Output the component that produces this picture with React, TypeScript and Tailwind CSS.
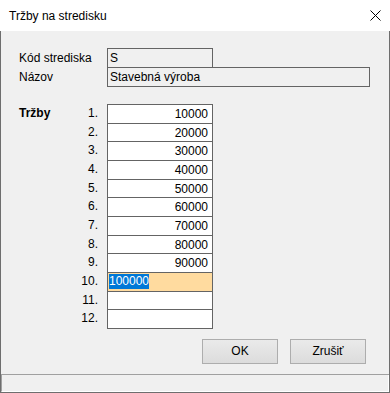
import React from 'react';

const VALUES = ['10000', '20000', '30000', '40000', '50000', '60000', '70000', '80000', '90000', '100000', '', ''];

const FONT = { fontFamily: '"Liberation Sans", Arial, sans-serif' };

function CloseIcon() {
  return (
    <svg width="11" height="11" viewBox="0 0 11 11" className="block">
      <path d="M0.5 0.5 L10.5 10.5 M10.5 0.5 L0.5 10.5" stroke="#000" strokeWidth="1" fill="none" />
    </svg>
  );
}

function Button({ label }: { label: string }) {
  return (
    <button className="w-[76px] h-[25px] border border-[#adadad] bg-gradient-to-b from-[#eaeaea] to-[#dcdcdc] text-[12px] text-black leading-none">
      {label}
    </button>
  );
}

export default function App() {
  return (
    <div className="w-[390px] h-[393px] flex flex-col bg-[#f0f0f0] text-black" style={FONT}>
      {/* Title bar */}
      <div className="h-[31px] bg-white flex items-center justify-between pl-[9px] pr-[9px] shrink-0">
        <span className="text-[12px] text-black">Tržby na stredisku</span>
        <CloseIcon />
      </div>

      {/* Body */}
      <div className="flex-1 flex flex-col border-l border-r border-b border-[#6e6e6e]">
        <div className="flex-1 flex flex-col pl-[18px] pt-[17px]">
          {/* Header fields */}
          <div className="flex items-center h-[20px]">
            <span className="w-[88px] text-[12px]">Kód strediska</span>
            <div className="w-[106px] h-[20px] border border-[#646464] pl-[2px] text-[12px] leading-[18px]">S</div>
          </div>
          <div className="flex items-center h-[20px] -mt-px">
            <span className="w-[88px] text-[12px]">Názov</span>
            <div className="w-[263px] h-[20px] border border-[#646464] pl-[2px] text-[12px] leading-[18px]">Stavebná výroba</div>
          </div>

          {/* Revenue table */}
          <div className="flex flex-col mt-[17px]">
            {VALUES.map((v, i) => (
              <div key={i} className={`flex h-[19.67px] ${i > 0 ? '-mt-px' : ''}`}>
                <div className="w-[88px] flex justify-between pr-[9px] text-[12px] leading-[19px]">
                  <span className="font-bold">{i === 0 ? 'Tržby' : ''}</span>
                  <span>{i + 1}.</span>
                </div>
                {i === 9 ? (
                  <div className="w-[106px] h-[19.67px] border border-[#646464] bg-[#ffdb9f] pl-[1px] flex items-center">
                    <span className="bg-[#0078d7] text-white text-[12px] leading-[15px]">{v}</span>
                  </div>
                ) : (
                  <div className="w-[106px] h-[19.67px] border border-[#646464] bg-white pr-[4px] text-right text-[12px] leading-[18px]">
                    {v}
                  </div>
                )}
              </div>
            ))}
          </div>

          {/* Buttons */}
          <div className="flex justify-end gap-[12px] pr-[23px] mt-[10px]">
            <Button label="OK" />
            <Button label="Zrušiť" />
          </div>
        </div>

        {/* Status bar */}
        <div className="h-[18px] border-t border-[#a0a0a0] shrink-0 flex">
          <div className="flex-1 border-l border-[#a0a0a0] border-r border-r-white border-b border-b-white" />
        </div>
      </div>
    </div>
  );
}
